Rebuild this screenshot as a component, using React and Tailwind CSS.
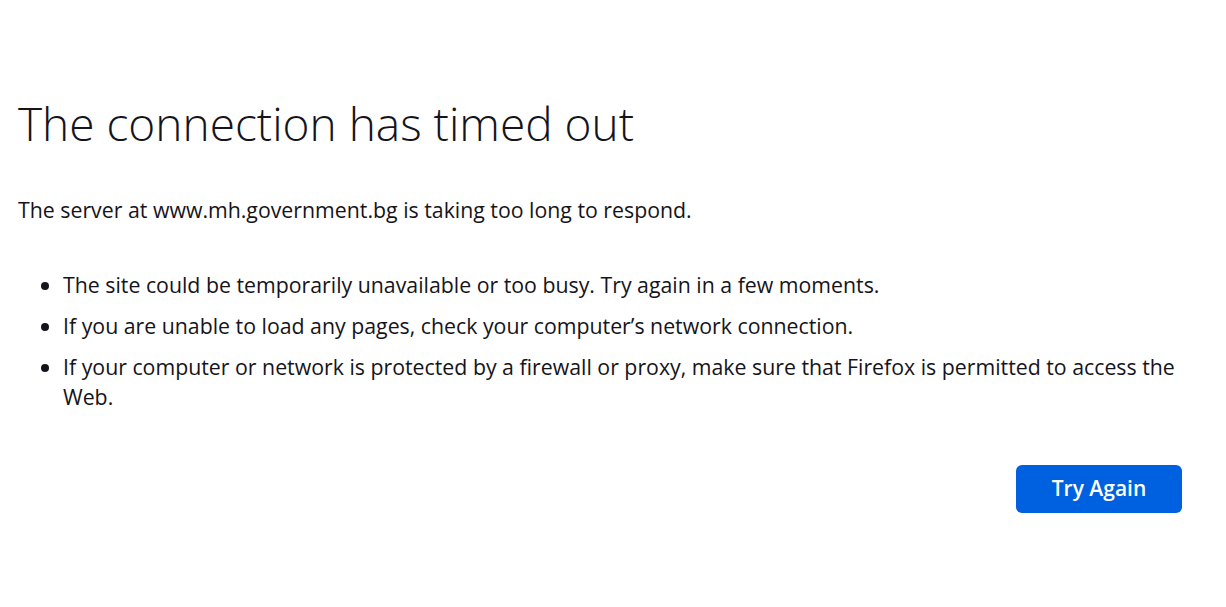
export default function App() {
    return (
        <div className="min-h-screen bg-white text-[#15141a]" style={{ fontFamily: '"Open Sans", sans-serif' }}>
            <div className="pl-[18px] pr-[44px] pt-[87px]">
                <h1 className="text-[46px] font-light leading-[72px]">The connection has timed out</h1>
                <p className="mt-[36px] text-[21.3px] leading-[30px]">The server at www.mh.government.bg is taking too long to respond.</p>
                <ul className="mt-[45px] list-disc pl-[45px] text-[21.3px] leading-[30px]">
                    <li className="mb-[11px]">The site could be temporarily unavailable or too busy. Try again in a few moments.</li>
                    <li className="mb-[11px]">If you are unable to load any pages, check your computer’s network connection.</li>
                    <li>If your computer or network is protected by a firewall or proxy, make sure that Firefox is permitted to access the Web.</li>
                </ul>
                <div className="mt-[53px] flex justify-end">
                    <button className="h-[48px] w-[166px] rounded-[6px] bg-[#0061e0] text-[21px] font-semibold text-white">Try Again</button>
                </div>
            </div>
        </div>
    );
}
